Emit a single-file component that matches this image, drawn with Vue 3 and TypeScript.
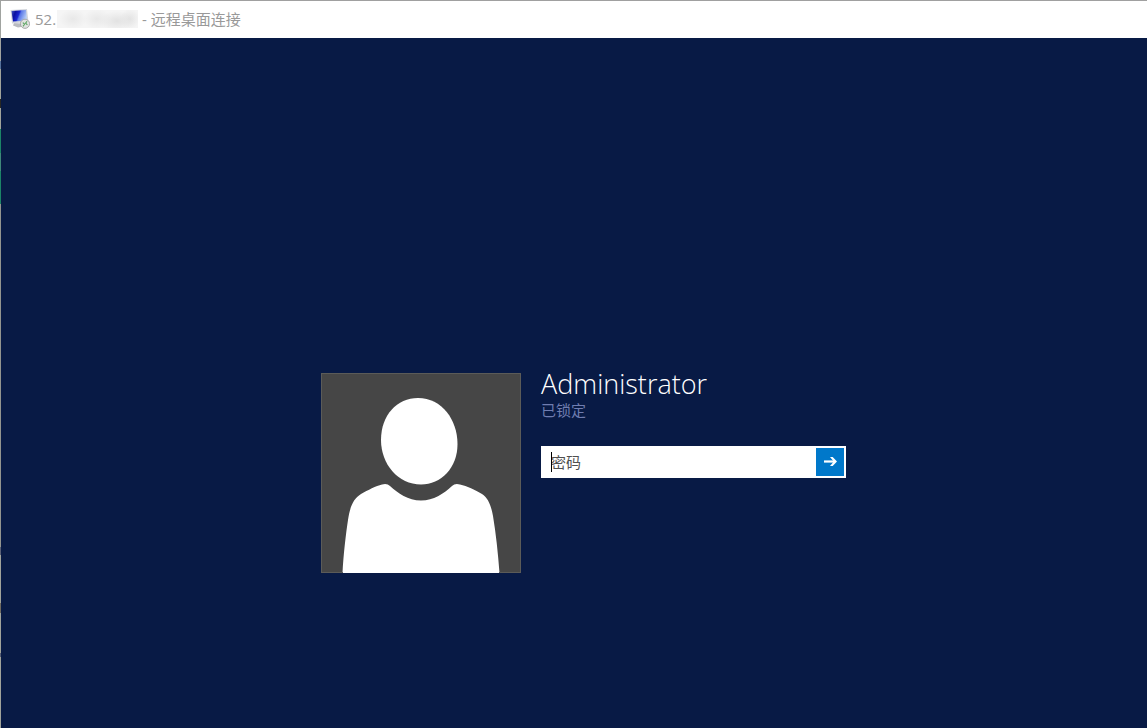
<script setup lang="ts">
import { ref } from 'vue'

const host = '52.'
const title = '- 远程桌面连接'
const user = 'Administrator'
const status = '已锁定'
const password = ref('')
</script>

<template>
  <div class="window">
    <header class="titlebar">
      <svg class="app-icon" viewBox="0 0 20 20" aria-hidden="true">
        <defs>
          <linearGradient id="screen" x1="0" y1="0.1" x2="1" y2="0.4">
            <stop offset="0" stop-color="#4a5cc0" />
            <stop offset="0.25" stop-color="#0a10a0" />
            <stop offset="0.5" stop-color="#1a26d0" />
            <stop offset="0.6" stop-color="#5a78e8" />
            <stop offset="1" stop-color="#b4ccf6" />
          </linearGradient>
        </defs>
        <path d="M4 14 L11 14.500 L11 18 L8 18.500 L3 16.500 Z" fill="#b9bbc0" />
        <path d="M0.500 1 L17 0 L18.500 13 L2 14.500 Z" fill="#d3d6dc" />
        <path d="M1.500 2 L16 1 L17 11.500 L3 12.500 Z" fill="url(#screen)" />
        <circle cx="15" cy="14.800" r="4.600" fill="#e0e2e0" stroke="#9a9c9c" stroke-width="0.800" />
        <path d="M12.800 13.600 L14.600 15.200 L13 17.400 M17 12.200 L15.600 14.200 L17.400 15.800" fill="none" stroke="#5ba560" stroke-width="1.100" />
      </svg>
      <h1 class="title">
        <span>{{ host }}</span>
        <span class="redacted" aria-hidden="true"></span>
        <span>{{ title }}</span>
      </h1>
    </header>

    <main class="desktop">
      <form class="login" @submit.prevent>
        <svg class="avatar" viewBox="0 0 200 200" aria-hidden="true">
          <rect width="200" height="200" fill="#464646" />
          <path d="M97 25 C121 25 136.500 47 136.500 71 C136.500 95 120 111.500 100 111.500 C77 111.500 60 91 60 67 C60 42 76 25 97 25 Z" fill="#fff" />
          <path d="M21.500 200 C22.500 181 25 160 27 147 C29 134 32 126 40 121 C47 117 55 113 61 111.500 Q66 110 69 113 C77 120 87 127.500 100 127.500 C113 127.500 122 121 131 113 Q134 110 139 111.500 C146 113 154 117 161 121 C167 125 170 132 172 143 C175 161 177 180 178.500 200 Z" fill="#fff" />
          <rect x="0.500" y="0.500" width="199" height="199" fill="none" stroke="#5b5b58" />
          <path d="M22 199.500 H178" stroke="#fff" />
        </svg>
        <div class="details">
          <h2 class="name">{{ user }}</h2>
          <p class="status">{{ status }}</p>
          <div class="field">
            <input v-model="password" class="password" type="password" placeholder="密码" aria-label="密码" />
            <span v-if="!password" class="caret"></span>
            <button class="submit" type="submit" aria-label="提交">
              <svg viewBox="0 0 28 28" aria-hidden="true">
                <path d="M8 13.500 H18" fill="none" stroke="#fff" stroke-width="2.200" />
                <path d="M14 9 H16.700 L21 13.500 L16.700 18 H14 L17.800 13.500 Z" fill="#fff" />
              </svg>
            </button>
          </div>
        </div>
      </form>
    </main>
  </div>
</template>

<style>
body {
  margin: 0;
  background: #081a45;
}
</style>

<style scoped>
.window {
  box-sizing: border-box;
  min-height: 100vh;
  display: flex;
  flex-direction: column;
  padding-left: 1px;
  border-top: 1px solid #a0a0a0;
  background: linear-gradient(
    #a0a3a0 0 60px, #55719b 60px 68px, #a0a39b 68px 98px, #282824 98px 107px,
    #a0a39b 107px 128px, #1b8467 128px 152px, #3f887a 152px 170px,
    #1b8467 170px 203px, #93958f 203px 546px, #596076 546px 554px,
    #a0a39b 554px 602px, #706b60 602px 612px, #a0a39b 612px 652px,
    #596076 652px 656px, #a0a39b 656px
  );
  font-family: "Open Sans", "Noto Sans CJK SC", sans-serif;
}

.titlebar {
  box-sizing: border-box;
  display: flex;
  align-items: center;
  gap: 5px;
  height: 37px;
  padding: 0 0 2px 9px;
  background: #fff;
}

.app-icon {
  width: 20px;
  height: 20px;
}

.title {
  display: flex;
  align-items: center;
  margin: 0;
  color: #999;
  font-family: "Open Sans", "Noto Sans CJK SC", sans-serif;
  font-size: 15px;
  font-weight: 400;
  line-height: 20px;
  white-space: nowrap;
}

.redacted {
  width: 81px;
  height: 18px;
  margin: 0 4px 0 1px;
  background:
    radial-gradient(ellipse 14px 10px at 16px 9px, #e8e8e8, transparent),
    radial-gradient(ellipse 14px 10px at 40px 9px, #e8e8e8, transparent),
    radial-gradient(ellipse 18px 10px at 60px 11px, #e2e2e2, transparent),
    radial-gradient(ellipse 10px 10px at 73px 9px, #e4e4e4, transparent),
    #f5f5f5;
}

.desktop {
  flex: 1;
  display: flex;
  justify-content: center;
  align-items: flex-start;
  padding: 335px 0 40px 19px;
  background: #081a45;
}

.login {
  display: flex;
  gap: 20px;
}

.avatar {
  width: 200px;
  height: 200px;
}

.details {
  width: 305px;
}

.name {
  margin: -7px 0 0;
  color: #fff;
  font-size: 27px;
  font-weight: 300;
  line-height: 36px;
}

.status {
  margin: 0;
  color: #6f7db0;
  font-size: 15px;
  line-height: 16px;
}

.field {
  position: relative;
  display: flex;
  box-sizing: border-box;
  height: 32px;
  margin-top: 28px;
  padding: 2px;
  background: #fff;
}

.password {
  flex: 1;
  min-width: 0;
  padding: 0 8px;
  border: 0;
  outline: 0;
  background: transparent;
  color: #333;
  font-family: "Open Sans", "Noto Sans CJK SC", sans-serif;
  font-size: 15px;
}

.password::placeholder {
  color: #505050;
  opacity: 1;
}

.caret {
  position: absolute;
  left: 10px;
  top: 6px;
  width: 1px;
  height: 20px;
  background: #000;
}

.submit {
  width: 28px;
  height: 28px;
  padding: 0;
  border: 0;
  background: #0078ca;
}

.submit svg {
  display: block;
  width: 28px;
  height: 28px;
}
</style>
